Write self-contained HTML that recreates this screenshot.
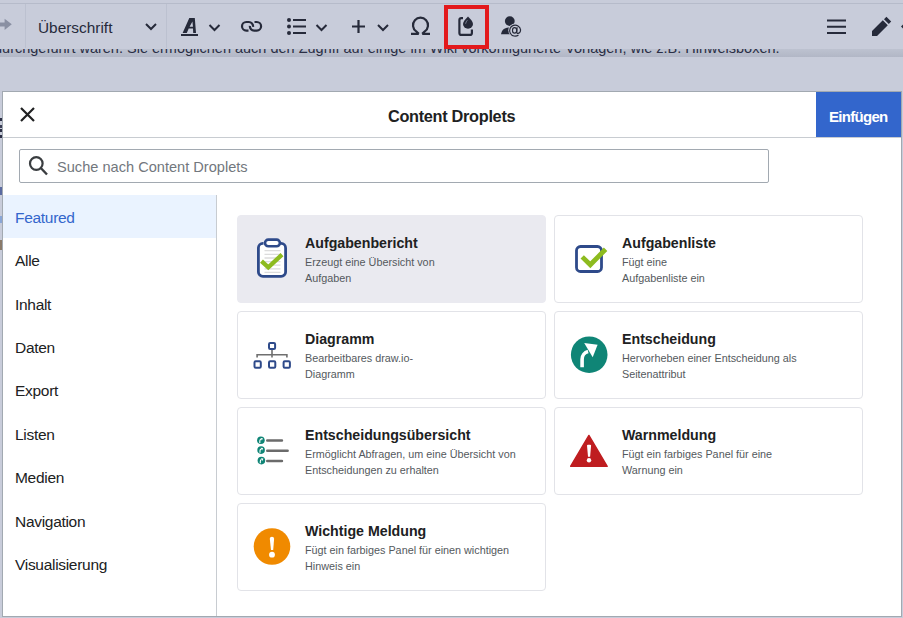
<!DOCTYPE html>
<html><head><meta charset="utf-8">
<style>
*{box-sizing:border-box;margin:0;padding:0}
html,body{width:903px;height:618px;overflow:hidden;background:#c8ccda;font-family:"Liberation Sans",sans-serif;position:relative}
.abs{position:absolute}
#tbline{left:0;top:3px;width:903px;height:1px;background:#b6bbca}
#shadow{left:0;top:49px;width:903px;height:7.5px;background:linear-gradient(#bdc2d0,#b2b7c6)}
#pagetext{left:-6px;top:38px;font-size:14.5px;color:#2a2e45;white-space:nowrap;}
#clip{left:0;top:49px;width:903px;height:8px;overflow:hidden}
.sep{top:4px;width:1px;height:44px;background:#bcc1d0}
.tt{color:#262a3a}
#dialog{left:2px;top:91px;width:900px;height:526px;background:#fff;border:1px solid #a2a9b1;}
#hdrline{left:3px;top:137px;width:898px;height:1px;background:#c8ccd1}
#title{left:388px;top:107px;font-size:16.3px;letter-spacing:-0.3px;font-weight:bold;color:#202122;white-space:nowrap}
#btn{left:816px;top:92px;width:85px;height:45px;background:#3366cc;color:#fff;font-weight:bold;font-size:14px}
#btn span{position:absolute;left:13px;top:16px;font-size:15px;letter-spacing:-0.7px}
#search{left:19px;top:149px;width:750px;height:34px;border:1px solid #a2a9b1;border-radius:2px}
#searchtext{left:57px;top:159px;font-size:14.6px;color:#72777d;white-space:nowrap}
#side{left:216px;top:195px;width:1px;height:421px;background:#c8ccd1}
.item{left:3px;width:213px;height:43px;font-size:15.5px;letter-spacing:-0.3px;color:#202122}
.item span{position:absolute;left:12px;top:13.8px;white-space:nowrap}
.item.sel{background:#eaf3ff;color:#3366cc}
.card{width:309px;height:88px;border:1px solid #e2e3e8;border-radius:4px;background:#fff}
.card.hov{background:#eaeaf0;border-color:#eaeaf0}
.card .t{position:absolute;left:67px;top:19px;font-size:14.2px;font-weight:bold;color:#202122;white-space:nowrap}
.card .d{position:absolute;left:67px;top:39px;font-size:10.8px;line-height:15.6px;color:#54595d;white-space:nowrap}
.card svg{position:absolute;left:0;top:0}
#red{left:444px;top:5px;width:45px;height:44px;border:4px solid #e3191c}
</style></head><body>
<!-- page text partially hidden -->
<div id="shadow" class="abs"></div>
<div id="clip" class="abs"><div id="pagetext" class="abs" style="top:-9px">durchgeführt wären. Sie ermöglichen auch den Zugriff auf einige im Wiki vorkonfigurierte Vorlagen, wie z.B. Hinweisboxen.</div></div>
<div id="tbline" class="abs"></div>
<div class="abs sep" style="left:25px"></div>
<div class="abs sep" style="left:166px"></div>
<!-- toolbar icons -->
<svg class="abs" style="left:0;top:0" width="903" height="49">
  <!-- redo arrow -->
  <path d="M-4 22.5 H4.6 V18.7 L11.8 24.3 L4.6 29.9 V26.5 H-4 Z" fill="#8a90a3"/>
</svg>
<div class="abs tt" style="left:38px;top:18.5px;font-size:15.4px;white-space:nowrap">Überschrift</div>

<svg class="abs" style="left:0;top:0" width="903" height="49" fill="none" stroke="#262a3a">
  <!-- chevrons -->
  <path d="M146 24 l5 5 l5 -5" stroke-width="2"/>
  <path d="M209.5 25 l5 5 l5 -5" stroke-width="2"/>
  <path d="M316.5 25 l5 5 l5 -5" stroke-width="2"/>
  <path d="M378 25 l5 5 l5 -5" stroke-width="2"/>
  <!-- A underline -->
  <path d="M181 35 h17" stroke-width="2"/><path fill-rule="evenodd" fill="#262a3a" stroke="none" d="M182.6 33 L189.3 18 L194.8 18 L196 33 L193.2 33 L193 28.6 L188.7 28.6 L186.8 33 Z M189.6 26.7 L193 26.7 L192.4 21.5 Z"/>
  <!-- link -->
  <g stroke-width="2.2">
  <path d="M248.5 30.6 L246.3 30.6 A4.3 4.3 0 0 1 246.3 22 L248.8 22 A4.3 4.3 0 0 1 253.1 26.8"/>
  <path d="M254.5 22 L256.8 22 A4.3 4.3 0 0 1 256.8 30.6 L254.2 30.6 A4.3 4.3 0 0 1 249.9 25.8"/>
  </g>
  <!-- list -->
  <g fill="#262a3a" stroke="none">
   <circle cx="289" cy="20" r="2"/><circle cx="289" cy="26.5" r="2"/><circle cx="289" cy="33" r="2"/>
   <rect x="293" y="19" width="13" height="2"/><rect x="293" y="25.5" width="13" height="2"/><rect x="293" y="32" width="13" height="2"/>
  </g>
  <!-- plus -->
  <path d="M352 26.5 h13 M358.5 20 v13" stroke-width="2.2"/>
  <!-- omega --><path d="M418.8 33.9 L416.2 31.3 A7.5 7.5 0 1 1 424.8 31.3 L422.2 33.9 M411 33.9 h7.8 M422.2 33.9 h7.8" stroke-width="2.2"/>
  <!-- hamburger -->
  <path d="M827 20.5 h19 M827 26.8 h19 M827 33 h19" stroke-width="2"/>
  <!-- pencil -->
  <path d="M872 36 v-5 l10.8 -10.8 l5 5 l-10.8 10.8 z M884 19.2 L886.4 16.8 L891.2 21.6 L888.8 24 Z" fill="#262a3a" stroke="none"/>
  <path d="M901 26.5 l2 -2 v4z" fill="#262a3a" stroke="none"/>
  <!-- droplet icon -->
  <path d="M463 18.1 h-1.6 a2 2 0 0 0 -2 2 v12.8 a2 2 0 0 0 2 2 h8.5 a2 2 0 0 0 2 -2 v-3.3" stroke-width="2.2"/>
  <path d="M468 16.5 C470.5 19 473 21.5 473 24 a5 4.7 0 0 1 -10 0 c0 -2.5 2.5 -5 5 -7.5z" fill="#262a3a" stroke="none"/><path d="M465.6 23.8 q0.3 -2 1.8 -3.6" stroke="#8a90a3" stroke-width="0.8"/>
  <!-- user @ -->
  <g fill="#262a3a" stroke="none">
   <circle cx="509.8" cy="21.1" r="4.9"/>
   <path d="M501 34.3 C501.5 30.5 504 27.6 508.5 27.4 L512 27.4 L512 34.3z"/>
  </g>
  <circle cx="515.2" cy="30.3" r="6.9" fill="#c8ccda" stroke="none"/>
  <g stroke-width="1.15" fill="none">
   <ellipse cx="514.6" cy="30.4" rx="2.1" ry="2.7"/>
   <path d="M517.1 27.3 L516.8 32.2 Q516.8 33.6 518.2 33.4 Q520.6 32.8 520.6 29.8 A5.5 5.5 0 1 0 518.5 35"/>
  </g>
</svg>

<div class="abs" style="left:0;top:118px;width:2px;height:3px;background:#2a2e45"></div>
<div class="abs" style="left:0;top:125px;width:2px;height:3px;background:#3a3e55"></div>
<div class="abs" style="left:0;top:129px;width:2px;height:3px;background:#2a2e45"></div>
<div class="abs" style="left:0;top:135px;width:2px;height:3px;background:#2a2e45"></div>
<div class="abs" style="left:0;top:187px;width:2px;height:8px;background:#5a6aa0"></div>
<div class="abs" style="left:0;top:216px;width:2px;height:7px;background:#8aa6d6"></div>
<div class="abs" style="left:0;top:240px;width:2px;height:10px;background:#8a7a6a"></div>
<div id="dialog" class="abs"></div>
<div id="hdrline" class="abs"></div>
<svg class="abs" style="left:0;top:0" width="60" height="140"><path d="M21 108 L34 121 M34 108 L21 121" stroke="#202122" stroke-width="2.2"/></svg>
<div id="title" class="abs">Content Droplets</div>
<div id="btn" class="abs"><span>Einfügen</span></div>
<div id="search" class="abs"></div>
<svg class="abs" style="left:0;top:140px" width="60" height="50"><circle cx="36.3" cy="23.5" r="6.3" fill="none" stroke="#3a3d40" stroke-width="2.2"/><path d="M40.8 28 L47 34.5" stroke="#3a3d40" stroke-width="2.4"/></svg>
<div id="searchtext" class="abs">Suche nach Content Droplets</div>
<div id="side" class="abs"></div>
<div class="abs item sel" style="top:195.0px"><span>Featured</span></div>
<div class="abs item" style="top:238.4px"><span>Alle</span></div>
<div class="abs item" style="top:281.8px"><span>Inhalt</span></div>
<div class="abs item" style="top:325.2px"><span>Daten</span></div>
<div class="abs item" style="top:368.6px"><span>Export</span></div>
<div class="abs item" style="top:412.0px"><span>Listen</span></div>
<div class="abs item" style="top:455.4px"><span>Medien</span></div>
<div class="abs item" style="top:498.8px"><span>Navigation</span></div>
<div class="abs item" style="top:542.2px"><span>Visualisierung</span></div>
<div class="abs card hov" style="left:237px;top:215px"><svg width="80" height="88">
   <rect x="20.4" y="27.4" width="27.2" height="33" rx="4.5" fill="#fff"/>
   <g stroke="#dcdcdc" stroke-width="1.3"><path d="M26.5 34.7h16M26.5 38.3h16M26.5 42h16M26.5 45.6h16M26.5 49.2h16M26.5 52.8h16M26.5 56.4h16"/></g>
   <path d="M25.5 27.4 h-0.6 a4.5 4.5 0 0 0 -4.5 4.5 v24 a4.5 4.5 0 0 0 4.5 4.5 h18.2 a4.5 4.5 0 0 0 4.5 -4.5 v-24 a4.5 4.5 0 0 0 -4.5 -4.5 h-0.6" fill="none" stroke="#2e4a8a" stroke-width="2.8"/>
   <rect x="27" y="23.6" width="14.9" height="6.6" rx="3.3" fill="#fff" stroke="#2e4a8a" stroke-width="2.6"/>
   <path d="M23.5 45.1 L30.3 51.3 L44 38.6" fill="none" stroke="#8dbb1f" stroke-width="4.3"/></svg><div class="t">Aufgabenbericht</div><div class="d">Erzeugt eine Übersicht von<br>Aufgaben</div></div>
<div class="abs card" style="left:554px;top:215px"><svg width="80" height="88"><rect x="21.5" y="30.5" width="25" height="25" rx="4" fill="none" stroke="#2e4a8a" stroke-width="2.8"/>
   <path d="M27.2 40.9 L35.3 48.8 L50.6 33.2" fill="none" stroke="#8dbb1f" stroke-width="4.8"/></svg><div class="t">Aufgabenliste</div><div class="d">Fügt eine<br>Aufgabenliste ein</div></div>
<div class="abs card" style="left:237px;top:311px"><svg width="80" height="88"><g fill="none" stroke="#2e4a8a" stroke-width="2"><rect x="31" y="31" width="6.1" height="6" rx="1.2"/><rect x="16.5" y="49.3" width="6.3" height="6.4" rx="1.2"/><rect x="31" y="49.3" width="6.3" height="6.4" rx="1.2"/><rect x="45.6" y="49.3" width="6.3" height="6.4" rx="1.2"/></g>
   <path d="M34 38 v7.5 M19.1 45.5 v-2.8 h29.8 v2.8" fill="none" stroke="#6f6f6f" stroke-width="1.6"/></svg><div class="t">Diagramm</div><div class="d">Bearbeitbares draw.io-<br>Diagramm</div></div>
<div class="abs card" style="left:554px;top:311px"><svg width="80" height="88"><circle cx="34.2" cy="42.7" r="18.3" fill="#0f8576"/>
   <path d="M27.1 55.3 v-8 a8 8 0 0 1 6 -7.7" fill="none" stroke="#fff" stroke-width="3.6"/>
   <path d="M29.2 31 L42.6 32.8 L37.7 45.3z" fill="#fff"/></svg><div class="t">Entscheidung</div><div class="d">Hervorheben einer Entscheidung als<br>Seitenattribut</div></div>
<div class="abs card" style="left:237px;top:407px"><svg width="80" height="88"><g fill="#0f8576"><circle cx="22.9" cy="32.3" r="3.8"/><circle cx="23.1" cy="42.1" r="3.8"/><circle cx="23.4" cy="52.6" r="3.8"/></g>
   <path d="M21.799999999999997 34.9 v-2 q0 -1.2 1.2 -1.6" fill="none" stroke="#fff" stroke-width="1.1"/><path d="M22.4 29.999999999999996 L24.9 30.199999999999996 L23.9 32.599999999999994z" fill="#fff"/><path d="M22.0 44.7 v-2 q0 -1.2 1.2 -1.6" fill="none" stroke="#fff" stroke-width="1.1"/><path d="M22.6 39.800000000000004 L25.1 40.0 L24.1 42.4z" fill="#fff"/><path d="M22.299999999999997 55.2 v-2 q0 -1.2 1.2 -1.6" fill="none" stroke="#fff" stroke-width="1.1"/><path d="M22.9 50.300000000000004 L25.4 50.5 L24.4 52.9z" fill="#fff"/>
   <path d="M29.3 32.5 h14.6 M29.3 42.8 h20.3 M29.3 53 h14.6" stroke="#6b6b6b" stroke-width="2.6" stroke-linecap="round"/></svg><div class="t">Entscheidungsübersicht</div><div class="d">Ermöglicht Abfragen, um eine Übersicht von<br>Entscheidungen zu erhalten</div></div>
<div class="abs card" style="left:554px;top:407px"><svg width="80" height="88"><path d="M33.9 27.4 L52.2 58.3 L15.6 58.3 Z" fill="#bf1d20" stroke="#bf1d20" stroke-width="1.4" stroke-linejoin="round"/>
   <path d="M32 37.6 a1 1 0 0 1 1 -0.9 h2.1 a1 1 0 0 1 1 0.9 l-1 11.1 h-2.1z" fill="#fff"/><circle cx="34" cy="52.3" r="2.2" fill="#fff"/></svg><div class="t">Warnmeldung</div><div class="d">Fügt ein farbiges Panel für eine<br>Warnung ein</div></div>
<div class="abs card" style="left:237px;top:503px"><svg width="80" height="88"><circle cx="34" cy="42.5" r="18.3" fill="#f08a00"/>
   <path d="M31.8 34.8 a2.15 2.15 0 0 1 4.3 0 l-0.9 11.2 h-2.2z" fill="#fff"/><circle cx="34" cy="50.7" r="2.9" fill="#fff"/></svg><div class="t">Wichtige Meldung</div><div class="d">Fügt ein farbiges Panel für einen wichtigen<br>Hinweis ein</div></div>
<div id="red" class="abs"></div>
</body></html>
